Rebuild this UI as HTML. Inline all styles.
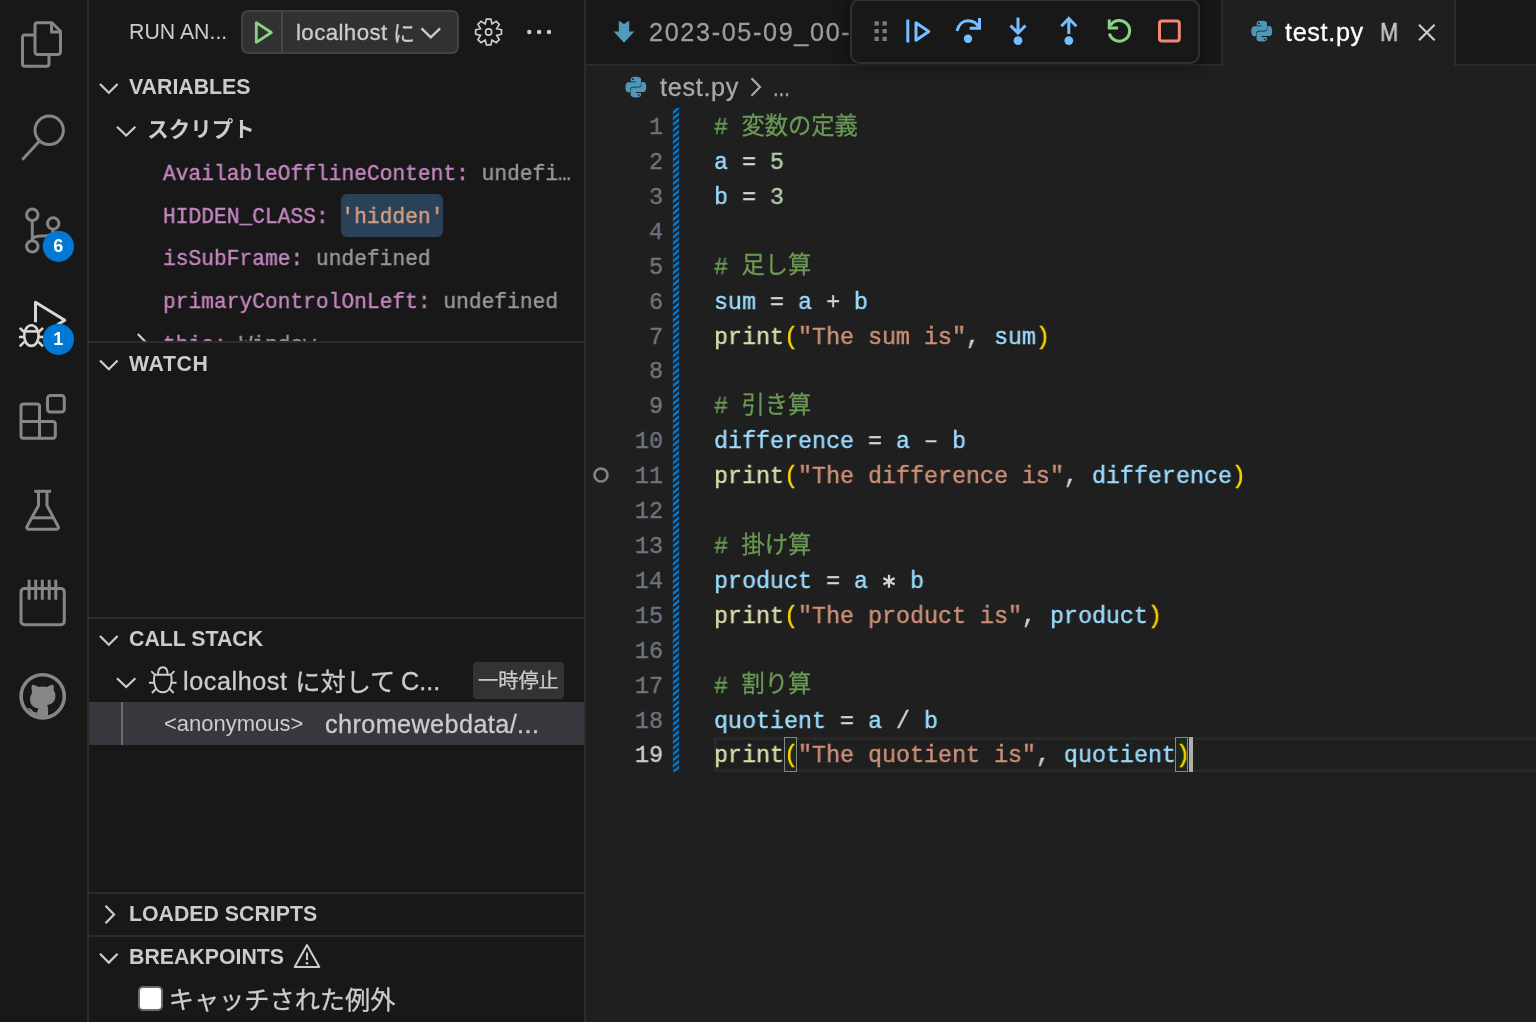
<!DOCTYPE html>
<html lang="ja">
<head>
<meta charset="utf-8">
<title>test.py</title>
<style>
*{box-sizing:border-box;margin:0;padding:0}
html,body{width:1536px;height:1022px;overflow:hidden;background:#1f1f1f}
body{position:relative;font-family:"Liberation Sans",sans-serif;color:#cccccc}
.abs{position:absolute}
.t{position:absolute;white-space:nowrap;line-height:1;transform-origin:0 0;will-change:transform}
.sans{font-family:"Liberation Sans",sans-serif}
.mono{font-family:"Liberation Mono",monospace}
.hdr{font-weight:bold;font-size:21.3px;color:#cccccc}
.ui{font-size:25.2px;color:#cccccc;-webkit-text-stroke:.3px currentColor}
.bd{position:absolute;background:#2b2b2b}
/* variables */
.var{font-family:"Liberation Mono",monospace;font-size:22.5px;left:163px;transform:scaleX(.944)}
.var,.cl,.ln{-webkit-text-stroke:.4px currentColor}
.vn{color:#c586c0}.vv{color:#999999}.vs{color:#d99e82}
/* code */
.ln{font-family:"Liberation Mono",monospace;font-size:24.3px;color:#6e7681;text-align:right;width:80px;left:583.3px;transform-origin:100% 0;transform:scaleX(.96)}
.cl{white-space:pre;font-family:"Liberation Mono",monospace;font-size:24.3px;left:713.8px;transform:scaleX(.96);color:#d4d4d4}
.c{color:#6a9955}.v{color:#9cdcfe}.n{color:#b5cea8}.f{color:#dcdcaa}.b{color:#ffd700}.s{color:#ce9178}
</style>
</head>
<body>
<!-- backgrounds -->
<div class="abs" style="left:0;top:0;width:87px;height:1022px;background:#181818"></div>
<div class="abs" style="left:89px;top:0;width:495px;height:1022px;background:#181818"></div>
<div class="bd" style="left:87px;top:0;width:2px;height:1022px"></div>
<div class="bd" style="left:584px;top:0;width:2px;height:1022px"></div>
<!-- tab bar -->
<div class="abs" style="left:586px;top:0;width:950px;height:64px;background:#181818"></div>
<div class="bd" style="left:586px;top:64px;width:950px;height:2px"></div>
<div class="abs" style="left:1221px;top:0;width:234.7px;height:66px;background:#1f1f1f;border-left:2px solid #2b2b2b;border-right:2px solid #2b2b2b"></div>

<!-- SIDEBAR -->
<div id="sidebar">
<div class="t sans" id="runan" style="left:129px;top:21.7px;font-size:21.3px;color:#cccccc">RUN AN...</div>
<div class="abs" style="left:241px;top:10px;width:218px;height:44px;background:#313131;border:2px solid #424242;border-radius:7px"></div>
<div class="abs" style="left:281px;top:11px;width:1.5px;height:42px;background:#474747"></div>
<div class="t ui" id="lhost" style="left:295.5px;top:22.2px;font-size:22.3px;letter-spacing:.4px">localhost</div>

<div class="t hdr" id="h1" style="left:129px;top:77px">VARIABLES</div>
<div class="t var" id="v1" style="top:162.9px"><span class="vn">AvailableOfflineContent:</span> <span class="vv">undefi…</span></div>
<div class="abs" style="left:341px;top:194px;width:102px;height:42.5px;background:#2a4158;border-radius:6px"></div>
<div class="t var" id="v2" style="top:205.5px"><span class="vn">HIDDEN_CLASS:</span> <span class="vs">'hidden'</span></div>
<div class="t var" id="v3" style="top:248.4px"><span class="vn">isSubFrame:</span> <span class="vv">undefined</span></div>
<div class="t var" id="v4" style="top:290.7px"><span class="vn">primaryControlOnLeft:</span> <span class="vv">undefined</span></div>
<div class="abs" style="left:89px;top:320px;width:495px;height:22px;overflow:hidden"><div class="t var" id="v5" style="top:13.5px;left:74px"><span class="vn">this:</span> <span class="vv">Window</span></div></div>
<div class="bd" style="left:89px;top:341px;width:495px;height:2px"></div>
<div class="t hdr" id="h3" style="left:129px;top:353.5px;letter-spacing:.6px">WATCH</div>
<div class="bd" style="left:89px;top:617px;width:495px;height:2px"></div>
<div class="t hdr" id="h4" style="left:129px;top:629px">CALL STACK</div>
<div class="t ui" id="cs1" style="left:183px;top:668.7px;letter-spacing:.57px">localhost</div>
<div class="t ui" id="cs2" style="left:401.3px;top:668.7px">C...</div>
<div class="abs" style="left:472.5px;top:662px;width:91.5px;height:37px;background:#333333;border-radius:4px"></div>
<div class="abs" style="left:89px;top:702.3px;width:495px;height:42.4px;background:#37373d"></div>
<div class="abs" style="left:120.5px;top:702.3px;width:2px;height:42.4px;background:#6b6b6b"></div>
<div class="t sans" id="anon" style="left:163.5px;top:713.4px;font-size:22px;color:#cccccc">&lt;anonymous&gt;</div>
<div class="t ui" id="cwd" style="left:324.5px;top:711.7px;letter-spacing:.42px">chromewebdata/...</div>
<div class="bd" style="left:89px;top:892px;width:495px;height:2px"></div>
<div class="t hdr" id="h5" style="left:129px;top:904px">LOADED SCRIPTS</div>
<div class="bd" style="left:89px;top:935px;width:495px;height:2px"></div>
<div class="t hdr" id="h6" style="left:129px;top:947px">BREAKPOINTS</div>
<div class="abs" style="left:138.2px;top:986px;width:24.5px;height:25px;background:#ffffff;border:2px solid #6b6b6b;border-radius:5px"></div>
</div>

<!-- EDITOR -->
<div id="editor">
<div class="t ui" id="tab1" style="left:648.5px;top:20.4px;color:#9d9d9d;letter-spacing:1.65px">2023-05-09_00-</div>
<!-- debug toolbar -->
<div class="abs" style="left:849.6px;top:-1.5px;width:350.8px;height:65.2px;background:#181818;border:2px solid #303030;border-radius:9.5px;box-shadow:0 0 16px rgba(0,0,0,.55)"></div>
<div class="t ui" id="tab2" style="left:1285.2px;top:19.9px;color:#ffffff;letter-spacing:.67px">test.py</div>
<div class="t ui" id="tabm" style="left:1380px;top:19.9px;color:#c5c5c5;transform:scaleX(.87);-webkit-text-stroke:.6px currentColor">M</div>
<div class="t ui" id="bc" style="left:660px;top:75.2px;color:#a9a9a9;letter-spacing:.7px">test.py</div>
<div class="t ui" id="bcd" style="left:772.5px;top:75.2px;transform:scaleX(.8);color:#a9a9a9">...</div>
<div id="deco">
<div class="abs" style="left:713.5px;top:737.2px;width:830px;height:34.6px;border:3.6px solid #282828"></div>
<div class="abs" style="left:783.5px;top:737.2px;width:13.3px;height:34.5px;border:1.8px solid #888888;background:#1c281c"></div>
<div class="abs" style="left:1175.2px;top:737.2px;width:13.3px;height:34.5px;border:1.8px solid #888888;background:#1c281c"></div>
<div class="abs" style="left:1188.5px;top:737.2px;width:4.1px;height:34.5px;background:#aeafad"></div>
</div>
<div id="code">
<div class="t ln" style="top:116.1px">1</div>
<div class="t cl" id="L1" style="top:116.1px"><span class="c">#</span></div>
<div class="t ln" style="top:151.0px">2</div>
<div class="t cl" id="L2" style="top:151.0px"><span class="v">a</span> = <span class="n">5</span></div>
<div class="t ln" style="top:185.9px">3</div>
<div class="t cl" id="L3" style="top:185.9px"><span class="v">b</span> = <span class="n">3</span></div>
<div class="t ln" style="top:220.8px">4</div>
<div class="t ln" style="top:255.7px">5</div>
<div class="t cl" id="L5" style="top:255.7px"><span class="c">#</span></div>
<div class="t ln" style="top:290.6px">6</div>
<div class="t cl" id="L6" style="top:290.6px"><span class="v">sum</span> = <span class="v">a</span> + <span class="v">b</span></div>
<div class="t ln" style="top:325.5px">7</div>
<div class="t cl" id="L7" style="top:325.5px"><span class="f">print</span><span class="b">(</span><span class="s">"The sum is"</span>, <span class="v">sum</span><span class="b">)</span></div>
<div class="t ln" style="top:360.4px">8</div>
<div class="t ln" style="top:395.3px">9</div>
<div class="t cl" id="L9" style="top:395.3px"><span class="c">#</span></div>
<div class="t ln" style="top:430.3px">10</div>
<div class="t cl" id="L10" style="top:430.3px"><span class="v">difference</span> = <span class="v">a</span> <span style="position:relative;top:-1.2px">–</span> <span class="v">b</span></div>
<div class="t ln" style="top:465.2px">11</div>
<div class="t cl" id="L11" style="top:465.2px"><span class="f">print</span><span class="b">(</span><span class="s">"The difference is"</span>, <span class="v">difference</span><span class="b">)</span></div>
<div class="t ln" style="top:500.1px">12</div>
<div class="t ln" style="top:535.0px">13</div>
<div class="t cl" id="L13" style="top:535.0px"><span class="c">#</span></div>
<div class="t ln" style="top:569.9px">14</div>
<div class="t cl" id="L14" style="top:569.9px"><span class="v">product</span> = <span class="v">a</span>   <span class="v">b</span></div>
<div class="t ln" style="top:604.8px">15</div>
<div class="t cl" id="L15" style="top:604.8px"><span class="f">print</span><span class="b">(</span><span class="s">"The product is"</span>, <span class="v">product</span><span class="b">)</span></div>
<div class="t ln" style="top:639.7px">16</div>
<div class="t ln" style="top:674.6px">17</div>
<div class="t cl" id="L17" style="top:674.6px"><span class="c">#</span></div>
<div class="t ln" style="top:709.5px">18</div>
<div class="t cl" id="L18" style="top:709.5px"><span class="v">quotient</span> = <span class="v">a</span> / <span class="v">b</span></div>
<div class="t ln" style="top:744.4px;color:#cccccc">19</div>
<div class="t cl" id="L19" style="top:744.4px"><span class="f">print</span><span class="b">(</span><span class="s">"The quotient is"</span>, <span class="v">quotient</span><span class="b">)</span></div>
</div><!--/code-->
</div>

<svg id="icons" class="abs" style="left:0;top:0" width="1536" height="1022" viewBox="0 0 1536 1022" fill="none">
<!-- ACTIVITY BAR -->
<g stroke="#868686" stroke-width="3" stroke-linejoin="round" stroke-linecap="butt">
 <!-- files -->
 <path d="M37.5 22.7H52L60.5 31.2V52a2.5 2.5 0 0 1-2.5 2.5H37.5A2.5 2.5 0 0 1 35 52V25.2a2.5 2.5 0 0 1 2.500-2.5Z"/>
 <path d="M51.5 23V32H60.5"/>
 <path d="M35 35H25a2.5 2.5 0 0 0-2.500 2.500V63.700a2.500 2.500 0 0 0 2.500 2.500H46.500a2.500 2.500 0 0 0 2.500-2.500V54.500"/>
 <!-- search -->
 <circle cx="49.2" cy="130.3" r="14.2"/>
 <path d="M39.3 141.3L22.3 159.800"/>
 <!-- source control -->
 <circle cx="32.3" cy="214.800" r="5.700"/>
 <circle cx="53.2" cy="223.500" r="5.700"/>
 <circle cx="32.3" cy="246.400" r="5.700"/>
 <path d="M32.3 220.5V240.700"/>
 <path d="M53.2 229.2C53.2 236.500 47 236 40.500 236C36 236 32.3 237 32.3 240.700"/>
 <!-- extensions -->
 <path d="M23.500 404.100H37a2.500 2.500 0 0 1 2.500 2.500V421.400H52.800a2.500 2.500 0 0 1 2.500 2.500V435.800a2.500 2.500 0 0 1-2.500 2.500H23.500a2.500 2.500 0 0 1-2.500-2.500V406.600a2.500 2.500 0 0 1 2.500-2.500Z"/>
 <path d="M21 421.400H39.500V438.300"/>
 <rect x="47.500" y="395.500" width="16.800" height="16.500" rx="2.800"/>
 <!-- flask -->
 <path d="M34.200 491.300H51.100"/>
 <path d="M38.500 491.300V505.500L27 526.500a1.800 1.800 0 0 0 1.600 2.700H56.600a1.800 1.800 0 0 0 1.600-2.700L47 505.500V491.300"/>
 <path d="M31.500 517.800H54"/>
 <!-- notebook -->
 <rect x="21" y="588.400" width="43.300" height="36.300" rx="3.500"/>
 <path d="M29.100 579.700V599.800M35.700 579.700V599.800M42.300 579.700V599.800M49.200 579.700V599.800M55.800 579.700V599.800"/>
 <!-- github -->
 <circle cx="42.700" cy="696.300" r="21.600" stroke-width="3.600"/>
</g>
<!-- github cat -->
<path transform="translate(42.7 700.3) scale(.93 .87) translate(-42.7 -697)" fill="#868686" d="M31 685.500c-.8 -3 -.2-5.500 .500-6.500c2.500 0 5 1.500 6.300 2.600c1.500-.4 3.200-.6 4.900-.6s3.400 .2 4.900 .600c1.300-1.100 3.800-2.600 6.300-2.600c.7 1 1.300 3.500 .500 6.500c1.300 1.700 2 3.800 2 6.200c0 7-4.300 10-9.200 10.800c.8 1 1.300 2.300 1.300 4v10.500c-2 1-9.500 1-11.600 0v-3.500c-5 1-6.500-2-7.500-4c-.6-1.200-1.600-2.200-2.600-2.800c-.8-.6 .2-1.100 1.200-.9c1.800 .4 2.800 1.800 3.600 3c1.400 2.200 3.400 2.600 5.300 1.900c.1-1.700 .6-3.200 1.500-4.200c-4.900-.8-9.400-3.800-9.400-10.800c0-2.400 .7-4.500 2-6.200Z"/>
<!-- debug (active) -->
<g stroke="#d7d7d7" stroke-width="3" stroke-linejoin="round" stroke-linecap="butt">
 <path d="M35.500 322.300V302.300L64.800 320.200L57.300 324.800"/>
</g>
<g stroke="#d7d7d7" stroke-width="2.600" stroke-linecap="butt">
 <ellipse cx="31.400" cy="335.600" rx="7.200" ry="10.300"/>
 <path d="M24.600 331.400H38.200"/>
 <path d="M24 332L19.800 327.800M24.400 337H19M24.300 341.800L19.800 346.300M38.800 332L43 327.800M38.400 337H43.800M38.500 341.800L43 346.300"/>
</g>
<!-- badges -->
<circle cx="58.400" cy="246.300" r="15.600" fill="#0078d4"/>
<circle cx="58.400" cy="339.300" r="15.600" fill="#0078d4"/>
<text x="58.300" y="252.300" text-anchor="middle" font-family="Liberation Sans, sans-serif" font-weight="bold" font-size="18" fill="#ffffff">6</text>
<text x="58.300" y="345.300" text-anchor="middle" font-family="Liberation Sans, sans-serif" font-weight="bold" font-size="18" fill="#ffffff">1</text>

<!-- SIDEBAR HEADER ICONS -->
<path d="M256.300 22.700V42.300L271.300 32.500Z" stroke="#89d185" stroke-width="2.800" stroke-linejoin="round"/>
<path d="M421.500 28.300L430.800 37.300L440.100 28.300" stroke="#cccccc" stroke-width="2.400"/>
<!-- gear -->
<g stroke="#cccccc" stroke-width="1.7" stroke-linejoin="miter">
<path d="M486.4 19.1L490.8 19.1L492.0 23.9L496.2 21.3L499.3 24.4L496.7 28.6L501.5 29.8L501.5 34.2L496.7 35.4L499.3 39.6L496.2 42.7L492.0 40.1L490.8 44.9L486.4 44.9L485.2 40.1L481.0 42.7L477.9 39.6L480.5 35.4L475.7 34.2L475.7 29.8L480.5 28.6L477.9 24.4L481.0 21.3L485.2 23.9Z"/>
<circle cx="488.6" cy="32.0" r="3.1"/>
</g>
<g fill="#cccccc"><circle cx="529.300" cy="32" r="2.200"/><circle cx="539.100" cy="32" r="2.200"/><circle cx="549" cy="32" r="2.200"/></g>

<!-- chevrons in sidebar -->
<g stroke="#cccccc" stroke-width="2.200">
 <path d="M100 84L108.800 92.800L117.600 84"/>
 <path d="M117 126.800L126.200 135.500L135.400 126.800"/>
 <path d="M100 360.500L108.800 369.300L117.600 360.500"/>
 <path d="M100 636L108.800 644.800L117.600 636"/>
 <path d="M117 678.300L126.200 687L135.400 678.300"/>
 <path d="M105.500 905.800L114 914.500L105.500 923.200"/>
 <path d="M100 953.800L108.800 962.600L117.600 953.800"/>
</g>
<clipPath id="cv"><rect x="89" y="320" width="495" height="21.200"/></clipPath>
<path clip-path="url(#cv)" d="M137.800 334L146.300 342.700L137.800 351.400" stroke="#cccccc" stroke-width="2.200"/>
<!-- bug icon (call stack) -->
<g stroke="#cccccc" stroke-width="1.900" stroke-linecap="butt" stroke-linejoin="round">
 <path d="M154.500 674.800H171.100C172.800 683.500 169.800 692.300 162.800 692.300C155.800 692.300 152.800 683.500 154.500 674.800Z"/>
 <path d="M158 674.600C158 669.600 160 667.300 162.800 667.300S167.600 669.600 167.600 674.600"/>
 <path d="M154.800 674.700L151.200 671.100M154 682.700H149M156.300 688.500L151.900 693M170.800 674.700L174.400 671.100M171.600 682.700H176.600M169.300 688.500L173.700 693"/>
</g>
<!-- warning triangle -->
<g stroke="#cccccc" stroke-width="2" stroke-linejoin="round">
 <path d="M307 945L319.300 967H294.700Z"/>
 <path d="M307 952.500V960"/>
</g>
<circle cx="307" cy="963.300" r="1.300" fill="#cccccc"/>

<!-- TAB ICONS -->
<!-- markdown arrow -->
<path fill="#519aba" d="M618.800 20.800L624 24L629.200 20.800V31.500H634.300L624 42.700L613.700 31.500H618.800Z"/>
<!-- python icons -->
<g id="py1" transform="translate(1251.300 20.700) scale(1.306)">
 <path fill="#4e97b8" d="M7.900 0C3.900 0 4.100 1.800 4.100 1.800V3.600H8V4.200H2.600S0 3.900 0 8s2.300 3.900 2.300 3.900H3.700V10S3.600 7.700 5.900 7.700H9.800S12 7.700 12 5.600V2.100S12.300 0 7.900 0ZM5.800 1.200A.7 .7 0 1 1 5.800 2.600A.7 .7 0 1 1 5.800 1.200Z"/>
 <path fill="#4e97b8" d="M8.100 16C12.100 16 11.900 14.200 11.900 14.200V12.400H8V11.800H13.400S16 12.100 16 8S13.700 4.100 13.700 4.100H12.300V6S12.400 8.300 10.100 8.300H6.200S4 8.300 4 10.400V13.900S3.700 16 8.100 16ZM10.200 14.800A.7 .7 0 1 1 10.200 13.400A.7 .7 0 1 1 10.200 14.800Z"/>
</g>
<use href="#py1" transform="translate(-625.900 56)"/>
<!-- close X -->
<path d="M1419 24.700L1434.600 40.300M1434.600 24.700L1419 40.300" stroke="#cccccc" stroke-width="2.200"/>
<!-- breadcrumb chevron -->
<path d="M751.500 78.300L760 87L751.500 95.700" stroke="#a9a9a9" stroke-width="2.200"/>

<!-- DEBUG TOOLBAR ICONS -->
<g fill="#7a7a7a">
 <rect x="874.500" y="21.300" width="4.300" height="4.300"/><rect x="882.500" y="21.300" width="4.300" height="4.300"/>
 <rect x="874.500" y="29" width="4.300" height="4.300"/><rect x="882.500" y="29" width="4.300" height="4.300"/>
 <rect x="874.500" y="36.700" width="4.300" height="4.300"/><rect x="882.500" y="36.700" width="4.300" height="4.300"/>
</g>
<g stroke="#75beff" stroke-width="3" stroke-linejoin="round">
 <path d="M907.800 19.500V42.500"/>
 <path d="M916 22.800V40.200L928.800 31.500Z"/>
 <!-- step over -->
 <path d="M957 31C958.500 24.500 963 20.700 968 20.700C973 20.700 977.300 23.500 979 28"/>
 <path d="M979.500 18V28.300H969.700" stroke-linejoin="miter"/>
 <!-- step into -->
 <path d="M1018 17.500V33.500M1010.500 25.500L1018 33.200L1025.500 25.500" stroke-linejoin="miter"/>
 <!-- step out -->
 <path d="M1068.800 34V18.300M1061.300 26.200L1068.800 18.500L1076.300 26.200" stroke-linejoin="miter"/>
</g>
<g fill="#75beff"><circle cx="968" cy="38.800" r="4.200"/><circle cx="1018" cy="40.600" r="4.400"/><circle cx="1068.800" cy="40.600" r="4.400"/></g>
<!-- restart -->
<g stroke="#89d185" stroke-width="3">
 <path d="M1110.500 25.500A10.300 10.300 0 1 1 1109.400 33.500"/>
 <path d="M1109.300 19.500V28H1118" />
</g>
<!-- stop -->
<rect x="1159.500" y="21" width="19.800" height="20" rx="2.500" stroke="#f48771" stroke-width="3"/>

<!--CJK-->
<g font-family="'Liberation Sans','Noto Sans CJK JP',sans-serif" fill="#cccccc">
<text x="147.2" y="137.25" font-size="21.5" font-weight="bold">スクリプト</text>
<text x="393.1" y="41" font-size="22" stroke="#cccccc" stroke-width=".26">に</text>
<text x="295.3" y="690.7" font-size="25.2" stroke="#cccccc" stroke-width=".3">に対して</text>
<text x="478" y="688.3" font-size="20.2" stroke="#cccccc" stroke-width=".24">一時停止</text>
<text x="168.7" y="1008.9" font-size="25.2" stroke="#cccccc" stroke-width=".3">キャッチされた例外</text>
</g>
<g font-family="'Liberation Mono','Noto Sans CJK JP',monospace" font-size="23.3" fill="#6a9955" stroke="#6a9955" stroke-width=".28">
<text x="741.4" y="133.75">変数の定義</text>
<text x="741.4" y="273.39">足し算</text>
<text x="741.4" y="413.02">引き算</text>
<text x="741.4" y="552.66">掛け算</text>
<text x="741.4" y="692.29">割り算</text>
</g>
<!--/CJK-->
<!-- EDITOR DECORATIONS -->
<defs><pattern id="hatch" x="672.8" y="108" width="6.4" height="5.94" patternUnits="userSpaceOnUse">
<g stroke="#0080e0" stroke-width="2.3">
<path d="M-3 -4.68L9.4 -14.60"/><path d="M-3 1.26L9.4 -8.66"/><path d="M-3 7.20L9.4 -2.72"/><path d="M-3 13.14L9.4 3.22"/><path d="M-3 19.08L9.4 9.16"/>
</g></pattern></defs>
<rect x="672.8" y="108" width="6.4" height="663.8" fill="url(#hatch)"/>
<path d="M889.0 574.7L889.0 587.7M883.4 578.0L894.6 584.5M894.6 578.0L883.4 584.5" stroke="#d4d4d4" stroke-width="2.3"/>
<circle cx="601" cy="475" r="6.500" stroke="#848484" stroke-width="2.600"/>
</svg>
</body>
</html>
